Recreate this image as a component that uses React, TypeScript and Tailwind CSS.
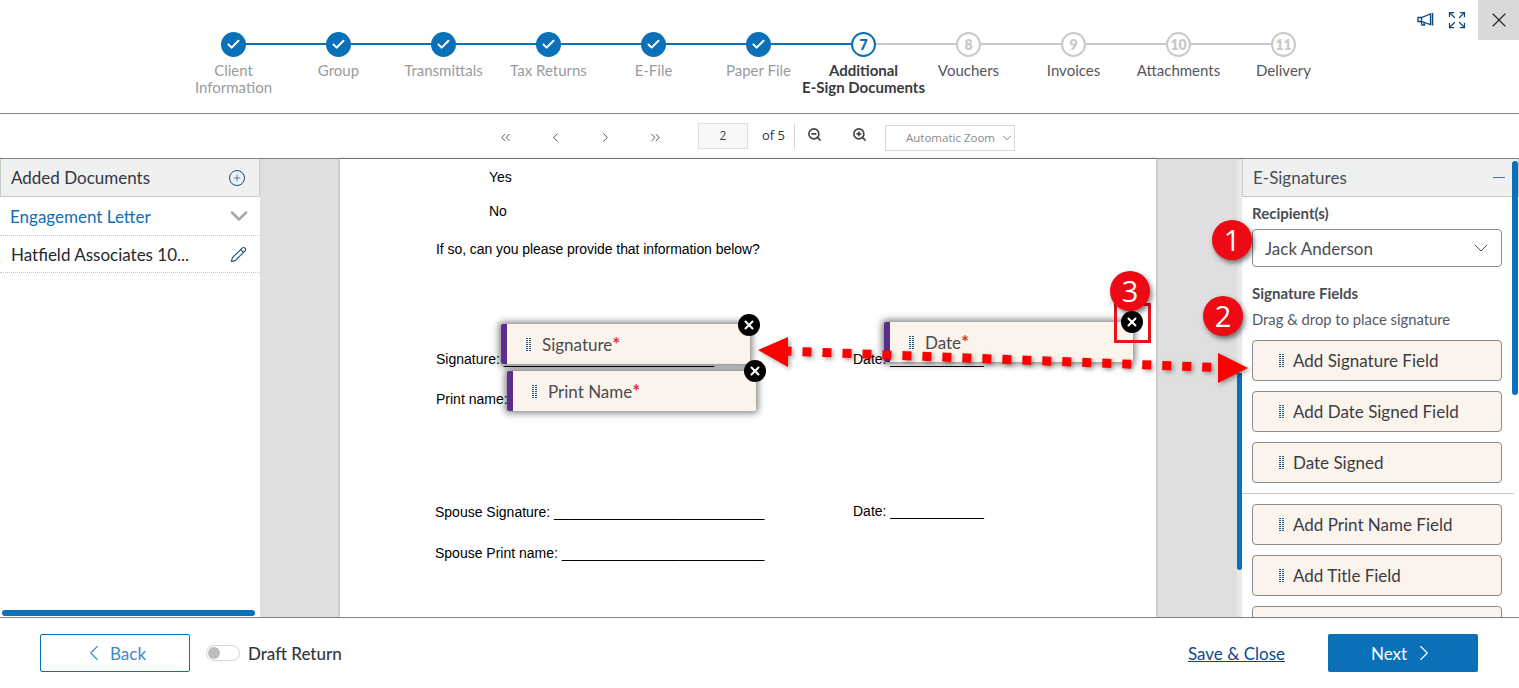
import React from "react";
import { ChevronDown, ChevronLeft, ChevronRight, ChevronsLeft, ChevronsRight, Check, Expand, Pencil, Plus, X, ZoomIn, ZoomOut } from "lucide-react";

const font = "font-['Lato','Noto_Sans',sans-serif]";

const steps = [
  { n: 1, label: ["Client", "Information"], state: "done" },
  { n: 2, label: ["Group"], state: "done" },
  { n: 3, label: ["Transmittals"], state: "done" },
  { n: 4, label: ["Tax Returns"], state: "done" },
  { n: 5, label: ["E-File"], state: "done" },
  { n: 6, label: ["Paper File"], state: "done" },
  { n: 7, label: ["Additional", "E-Sign Documents"], state: "current" },
  { n: 8, label: ["Vouchers"], state: "todo" },
  { n: 9, label: ["Invoices"], state: "todo" },
  { n: 10, label: ["Attachments"], state: "todo" },
  { n: 11, label: ["Delivery"], state: "todo" },
];

function Grip() {
  const dots = [];
  for (let y = 0; y < 7; y++) {
    for (let x = 0; x < 2; x++) {
      dots.push(<rect key={`${x}-${y}`} x={x * 3} y={y * 2} width="2" height="1" fill="#1c5a8c" />);
    }
  }
  return (
    <svg width="5" height="13" viewBox="0 0 5 13" shapeRendering="crispEdges" className="shrink-0">
      {dots}
    </svg>
  );
}

function Step({ s, i }: { s: (typeof steps)[number]; i: number }) {
  const done = s.state === "done";
  const cur = s.state === "current";
  const lineBlue = i < 6;
  return (
    <div className="relative flex w-[105px] shrink-0 flex-col items-center">
      {i < steps.length - 1 && (
        <div className={`absolute left-[52px] top-[11px] h-[2px] w-[105px] ${lineBlue ? "bg-[#0a70b8]" : "bg-[#c9c9c9]"}`} />
      )}
      {done ? (
        <div className="relative z-10 flex h-[25px] w-[25px] items-center justify-center rounded-full bg-[#0a70b8]">
          <Check size={15} strokeWidth={3.2} className="text-white" />
        </div>
      ) : (
        <div
          className={`relative z-10 flex h-[25px] w-[25px] items-center justify-center rounded-full border-2 bg-white text-[14px] font-extrabold ${
            cur ? "border-[#0a70b8] text-[#0a70b8]" : "border-[#c9c9c9] text-[#c9c9c9]"
          }`}
        >
          {s.n}
        </div>
      )}
      <div
        className={`mt-[5px] whitespace-nowrap text-center text-[15px] leading-[17px] ${
          done ? "text-[#9a9b9d]" : cur ? "font-bold text-[#3a3b3d]" : "text-[#55565a]"
        }`}
      >
        {s.label.map((l) => (
          <div key={l}>{l}</div>
        ))}
      </div>
    </div>
  );
}

function FieldButton({ label }: { label: string }) {
  return (
    <div className="flex h-[41px] shrink-0 items-center gap-[9px] rounded-[4px] border border-[#8b8b8b] bg-[#fbf4ec] pl-[26px] text-[17px] text-[#3a3d45]">
      <Grip />
      <span>{label}</span>
    </div>
  );
}

function CloseDot({ className }: { className: string }) {
  return (
    <div className={`absolute flex h-[22px] w-[22px] items-center justify-center rounded-full bg-black ${className}`}>
      <X size={14} strokeWidth={3.5} className="text-white" />
    </div>
  );
}

function PlacedField({ label, className }: { label: string; className: string }) {
  return (
    <div className={`absolute flex h-[40px] w-[249px] items-center gap-[11px] rounded-[2px] border-l-[6px] border-[#5b2d8c] bg-[#fbf4ec] pl-[19px] pt-[1px] text-[17px] text-[#4a4b50] shadow-[0_0_7px_2px_rgba(0,0,0,0.5)] ${className}`}>
      <Grip />
      <span className="leading-[14px]">
        {label}
        <span className="text-[19px] leading-[14px] font-bold text-[#d9363e]">*</span>
      </span>
    </div>
  );
}

function Badge({ n, className }: { n: number; className: string }) {
  return (
    <div className={`absolute z-30 flex h-[40px] w-[40px] items-center justify-center rounded-full bg-[#ee0a14] text-[29px] text-white shadow-[2px_3px_5px_rgba(0,0,0,0.5)] font-['Open_Sans',sans-serif] ${className}`}>
      {n}
    </div>
  );
}

function ToolBtn({ children }: { children: React.ReactNode }) {
  return <div className="mt-[2px] flex w-[50px] justify-center text-[#444]">{children}</div>;
}

export default function App() {
  return (
    <div className={`relative flex h-[688px] w-[1519px] flex-col overflow-hidden bg-white ${font}`}>
      {/* Header */}
      <header className="relative flex h-[114px] shrink-0 justify-center border-b border-[#808080] pt-[32px]">
        <div className="flex -translate-x-[1px]">
          {steps.map((s, i) => (
            <Step key={s.n} s={s} i={i} />
          ))}
        </div>
        <div className="absolute right-0 top-0 flex items-start">
          <svg width="18" height="16" viewBox="0 0 18 16" fill="none" stroke="#0d4a80" strokeWidth="1.3" className="mr-[12px] mt-[12px]">
            <path d="M1 5.5h3.5L13.5 2v10.5L4.5 9.5H1z" />
            <path d="M15.5 1v12.5" strokeWidth="1.6" />
            <path d="M4 9.5l1 3.5h2.5L6.8 10.3" />
            <path d="M4.5 5.5v4" />
          </svg>
          <Expand size={20} strokeWidth={1.5} className="mr-[11px] mt-[10px] text-[#0d4a80]" />
          <div className="flex h-[40px] w-[41px] items-center justify-center bg-[#d9d9d9]">
            <X size={24} strokeWidth={1.1} className="text-[#222]" />
          </div>
        </div>
      </header>

      {/* Toolbar */}
      <div className="flex h-[45px] shrink-0 items-center border-b border-[#808080] pl-[480px] font-['Open_Sans',sans-serif]">
        <ToolBtn><ChevronsLeft size={15} strokeWidth={1.5} /></ToolBtn>
        <ToolBtn><ChevronLeft size={15} strokeWidth={1.5} /></ToolBtn>
        <ToolBtn><ChevronRight size={15} strokeWidth={1.5} /></ToolBtn>
        <ToolBtn><ChevronsRight size={15} strokeWidth={1.5} /></ToolBtn>
        <div className="ml-[18px] flex h-[26px] w-[50px] items-center justify-center border border-[#dcdfe2] bg-[#f8f8f8] text-[12px] text-[#444]">2</div>
        <span className="ml-[14px] text-[13px] text-[#333]">of 5</span>
        <div className="ml-[9px] h-[25px] w-px bg-[#d5d5d5]" />
        <ZoomOut size={15} strokeWidth={2.6} className="ml-[12px] mb-[4px] text-[#444]" />
        <ZoomIn size={15} strokeWidth={2.6} className="ml-[30px] mb-[4px] text-[#444]" />
        <div className="ml-[18px] mt-[3px] flex h-[26px] w-[130px] items-center border border-[#d8d8d8] pl-[20px] text-[11.5px] text-[#8a8a8a]">
          Automatic Zoom
          <ChevronDown size={14} strokeWidth={1.2} className="ml-[5px] text-[#555]" />
        </div>
      </div>

      {/* Main */}
      <main className="flex min-h-0 flex-1">
        {/* Left */}
        <aside className="relative flex w-[260px] shrink-0 flex-col">
          <div className="flex h-[38px] shrink-0 items-center justify-between border border-t-0 border-[#c9cccc] bg-[#eff1f1] pl-[10px] pr-[14px] text-[17px] text-[#33363d]">
            Added Documents
            <div className="flex h-[16px] w-[16px] items-center justify-center rounded-full border border-[#1c4a75]">
              <Plus size={10} strokeWidth={1.6} className="text-[#1c4a75]" />
            </div>
          </div>
          <div className="flex h-[38px] shrink-0 items-center justify-between pl-[10px] pr-[7px] pt-[1px] text-[17px] text-[#0a70b8]">
            Engagement Letter
            <ChevronDown size={28} strokeWidth={2.2} className="-mt-[2px] text-[#a9a9a9]" />
          </div>
          <div className="flex h-[38px] shrink-0 items-center justify-between border-y border-dotted border-[#c4c4c4] pl-[11px] pr-[13px] pt-[1px] text-[17px] text-[#26282e]">
            Hatfield Associates 10...
            <Pencil size={17} strokeWidth={1.5} className="text-[#1c4a75]" />
          </div>
          <div className="mt-auto mb-[1px] ml-[2px] h-[6px] w-[253px] rounded-full bg-[#0a70b8]" />
        </aside>

        {/* Viewer */}
        <section className="flex min-w-0 flex-1 justify-start bg-[#dfdfdf] pl-[80px]">
          <div className="relative w-[816px] bg-white pt-[10px] font-['Liberation_Sans',sans-serif] text-[14px] leading-[16px] text-black shadow-[0_0_3px_rgba(0,0,0,0.3)]">
            <div className="pl-[149px]">Yes</div>
            <div className="mt-[18px] pl-[149px]">No</div>
            <div className="mt-[22px] pl-[96px] tracking-[-0.06px]">If so, can you please provide that information below?</div>
            <div className="mt-[94px] grid grid-cols-[417px_1fr] pl-[96px] whitespace-nowrap">
              <div>Signature: ___________________________</div>
              <div>Date: ____________</div>
            </div>
            <div className="mt-[24px] pl-[96px] whitespace-nowrap">Print name:</div>
            <div className="mt-[97px] grid grid-cols-[418px_1fr] pl-[95px] whitespace-nowrap">
              <div>Spouse Signature: ___________________________</div>
              <div className="-mt-[1px]">Date: ____________</div>
            </div>
            <div className="mt-[25px] pl-[95px] whitespace-nowrap">Spouse Print name: __________________________</div>

            <div className={font}>
              <PlacedField label="Signature" className="left-[161px] top-[165px]" />
              <CloseDot className="left-[398px] top-[155px]" />
              <PlacedField label="Print Name" className="left-[167px] top-[212px]" />
              <CloseDot className="left-[404px] top-[201px]" />
              <PlacedField label="Date" className="left-[544px] top-[163px]" />
              <CloseDot className="left-[781px] top-[152px] z-10" />
            </div>
          </div>
        </section>

        {/* Scrollbar track of the panel */}
        <div className="relative w-[5px] shrink-0 bg-[#e9e9e9]">
          <div className="absolute bottom-[47px] top-[214px] w-full rounded-b-full bg-[#0a70b8]" />
        </div>

        {/* Right */}
        <aside className="relative w-[277px] shrink-0 overflow-hidden">
          <div className="flex h-[38px] items-center justify-between border border-t-0 border-[#c9cccc] bg-[#eff1f1] pl-[10px] pr-[13px] text-[17px] text-[#4a4d52]">
            E-Signatures
            <div className="h-px w-[12px] bg-[#4f7196]" />
          </div>
          <div className="absolute right-[1px] top-[2px] h-[234px] w-[6px] rounded-full bg-[#0a70b8]" />
          <div className="flex flex-col px-[10px]">
            <div className="mt-[8px] text-[15px] font-bold leading-[17px] text-[#4a4d52]">Recipient(s)</div>
            <div className="mt-[7px] flex h-[38px] w-[250px] items-center justify-between rounded-[4px] border border-[#8b8b8b] pl-[12px] pr-[8px] text-[17px] text-[#4a4d52]">
              <span className="pt-[1px]">Jack Anderson</span>
              <ChevronDown size={24} strokeWidth={1} className="text-[#555]" />
            </div>
            <div className="mt-[18px] text-[15px] font-bold leading-[17px] text-[#4a4d52]">Signature Fields</div>
            <div className="mt-[9px] text-[14.8px] leading-[17px] text-[#55585d]">Drag &amp; drop to place signature</div>
            <div className="mt-[12px] flex w-[250px] flex-col gap-[10px]">
              <FieldButton label="Add Signature Field" />
              <FieldButton label="Add Date Signed Field" />
              <FieldButton label="Date Signed" />
            </div>
          </div>
          <div className="mr-[5px] mt-[10px] h-px bg-[#c9c9c9]" />
          <div className="ml-[10px] mt-[10px] flex w-[250px] flex-col gap-[10px]">
            <FieldButton label="Add Print Name Field" />
            <FieldButton label="Add Title Field" />
            <div className="h-[41px] shrink-0 rounded-[4px] border border-[#8b8b8b] bg-[#fbf4ec]" />
          </div>
        </aside>
      </main>

      {/* Footer */}
      <footer className="relative z-10 flex h-[71px] shrink-0 items-center border-t border-[#808080] bg-white pl-[40px] pr-[41px]">
        <div className="flex h-[38px] w-[150px] items-center justify-center gap-[3px] rounded-[2px] border border-[#0a70b8] pr-[3px] text-[17px] text-[#3b8cc4]">
          <ChevronLeft size={26} strokeWidth={1} />
          <span className="pt-[1px]">Back</span>
        </div>
        <div className="ml-[16px] flex h-[16px] w-[34px] items-center rounded-full border border-[#d5d5d5] pl-[1px]">
          <div className="h-[12px] w-[12px] rounded-full bg-[#bdbdbd]" />
        </div>
        <span className="ml-[8px] pt-[1px] text-[17px] font-medium text-[#33363d]">Draft Return</span>
        <span className="ml-auto pt-[1px] text-[17px] text-[#0d4a80] underline">Save &amp; Close</span>
        <div className="ml-[43px] flex h-[38px] w-[150px] items-center justify-center gap-[4px] rounded-[2px] bg-[#0a70b8] pl-[2px] text-[17px] text-white">
          <span className="pt-[1px]">Next</span>
          <ChevronRight size={26} strokeWidth={1} />
        </div>
      </footer>

      {/* Annotations */}
      <svg width="1519" height="688" className="pointer-events-none absolute left-0 top-0 z-20 drop-shadow-[2px_2px_2px_rgba(0,0,0,0.35)]">
        <line x1="782.5" y1="351" x2="1218" y2="367.5" stroke="#ff0000" strokeWidth="9" strokeDasharray="9 11" />
        <polygon points="758,350 788,337 788,367" fill="#ff0000" />
        <polygon points="1248,368 1218,353 1218,383" fill="#ff0000" />
      </svg>
      <div className="absolute left-[1114px] top-[303px] z-20 h-[40px] w-[37px] border-[3px] border-[#e8141c]" />
      <Badge n={1} className="left-[1212px] top-[220px]" />
      <Badge n={2} className="left-[1203px] top-[296px]" />
      <Badge n={3} className="left-[1110px] top-[271px]" />
    </div>
  );
}
